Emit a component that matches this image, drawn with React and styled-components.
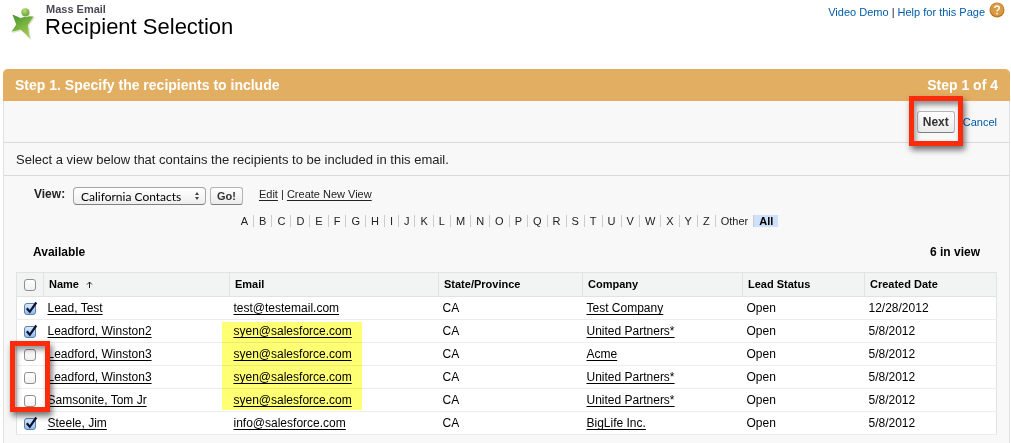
import React, { useState } from "react";
import styled, { createGlobalStyle } from "styled-components";

const GlobalStyle = createGlobalStyle`
  * {
    box-sizing: border-box;
  }
  body {
    margin: 0;
    background: #ffffff;
    color: #222222;
    font-family: "Liberation Sans", Arial, Helvetica, sans-serif;
    font-size: 12px;
    overflow-x: hidden;
  }
`;

const Page = styled.main`
  padding: 0 1px 0 3px;
`;

const Header = styled.header`
  height: 69px;
  display: flex;
  align-items: flex-start;
  padding: 2px 5px 0 6px;
`;

const Heading = styled.h1`
  flex: 1;
  margin: 0 0 0 6px;
  font-weight: normal;
`;

const Kicker = styled.span`
  display: block;
  padding-left: 1px;
  font-size: 11px;
  line-height: 14px;
  font-weight: bold;
  color: #4a4a56;
`;

const Title = styled.span`
  display: block;
  font-size: 22px;
  line-height: 22px;
  color: #000000;
`;

const HelpLinks = styled.nav`
  display: flex;
  align-items: flex-end;
  gap: 4px;
  font-size: 11px;
  line-height: 12px;
  color: #222222;
`;

const BlueLink = styled.a`
  color: #015ba7;
  font-size: 11px;
  text-decoration: none;
`;

const Panel = styled.section`
  border: 1px solid #e0e3e5;
  border-top: 0;
  border-radius: 5px 5px 0 0;
  background: #f8f8f8;
`;

const StepBar = styled.div`
  display: flex;
  justify-content: space-between;
  align-items: center;
  height: 32px;
  margin: 0 -1px;
  padding: 0 12px;
  border-radius: 5px 5px 0 0;
  background: #e2ae62;
  color: #ffffff;
`;

const StepText = styled.h2`
  margin: 0;
  font-size: 14px;
  font-weight: bold;
`;

const Actions = styled.div`
  display: flex;
  justify-content: flex-end;
  align-items: center;
  gap: 8px;
  height: 42px;
  padding: 0 12px;
  border-bottom: 1px solid #dbdbdb;
`;

const Button = styled.button`
  height: ${(props) => (props.$tall ? 22 : 18)}px;
  padding: 0 ${(props) => (props.$tall ? 5 : 6)}px;
  border: 1px solid #b5b5b5;
  border-bottom-color: #7f7f7f;
  border-radius: 3px;
  background: linear-gradient(#ffffff, #ebebeb);
  color: #333333;
  font-family: inherit;
  font-size: ${(props) => (props.$tall ? 12 : 11)}px;
  font-weight: bold;
`;

const Intro = styled.p`
  margin: 0;
  padding: 1px 12px 0;
  font-size: 13px;
  line-height: 31px;
  border-bottom: 1px solid #dbdbdb;
`;

const ViewRow = styled.form`
  display: flex;
  align-items: flex-start;
  gap: 4px;
  padding: 11px 30px 0;
`;

const ViewLabel = styled.label`
  width: 35px;
  line-height: 14px;
  font-weight: bold;
`;

const SelectBox = styled.div`
  position: relative;
  display: flex;
`;

const ViewSelect = styled.select`
  appearance: none;
  width: 133px;
  height: 18px;
  padding: 0 7px;
  border: 1px solid #a5a5a5;
  border-bottom-color: #7f7f7f;
  border-radius: 4px;
  background: linear-gradient(#ffffff, #eeeeee);
  color: #000000;
  font-family: "Lato", sans-serif;
  font-size: 12px;
`;

const SelectArrows = styled.svg`
  position: absolute;
  right: 6px;
  top: 5px;
  pointer-events: none;
`;

const ViewLinks = styled.div`
  padding-left: 12px;
  font-size: 11px;
  line-height: 14px;
  a {
    color: #222222;
    text-underline-offset: 2px;
  }
`;

const Rolodex = styled.nav`
  display: flex;
  justify-content: center;
  margin-top: 10px;
`;

const Letter = styled.a`
  padding: 0 5px;
  border-left: 1px solid ${(props) => (props.$first ? "transparent" : "#cccccc")};
  background: ${(props) => (props.$active ? "#cfe1fa" : "transparent")};
  color: ${(props) => (props.$active ? "#000000" : "#222222")};
  font-size: 11px;
  line-height: 12px;
  font-weight: ${(props) => (props.$active ? "bold" : "normal")};
  text-decoration: none;
`;

const ListHeader = styled.div`
  display: flex;
  justify-content: space-between;
  padding: 17px 29px 12px;
  color: #000000;
  font-size: 12px;
  line-height: 16px;
  font-weight: bold;
`;

const TableWrap = styled.div`
  position: relative;
  padding: 0 12px 8px;
`;

const Table = styled.table`
  width: 100%;
  table-layout: fixed;
  border-collapse: collapse;
  border: 1px solid #e0e3e5;
  background: #ffffff;
  color: #000000;
`;

const Col = styled.col`
  width: ${(props) => props.$width};
`;

const HeadCell = styled.th`
  height: 24px;
  padding: 0 5px 1px;
  border: 1px solid #e0e3e5;
  background: #f2f3f3;
  font-size: 11px;
  text-align: left;
`;

const CheckHeadCell = styled(HeadCell)`
  padding: 0 4px;
`;

const Cell = styled.td`
  height: 23px;
  padding: 0 4px;
  border-bottom: 1px solid #ececec;
  font-size: 12px;
  a {
    color: #000000;
    text-underline-offset: 2px;
  }
`;

const SortArrow = styled.svg`
  margin-left: 7px;
`;

const Checkbox = styled.input`
  appearance: none;
  display: block;
  width: 12px;
  height: 12px;
  margin: 1px 0 0 3px;
  border: 1px solid #8f8f8f;
  border-radius: 3px;
  background: linear-gradient(#ffffff, #f0f0f0);
  &:checked {
    border-color: #5f7fae;
    background: linear-gradient(#dcebfb, #8fbdf0);
  }
`;

const CheckBoxWrap = styled.span`
  position: relative;
  display: block;
`;

const Tick = styled.svg`
  position: absolute;
  left: 3px;
  top: -2px;
  pointer-events: none;
`;

const Highlight = styled.div`
  position: absolute;
  left: 218px;
  top: 50px;
  width: 140px;
  height: 88px;
  background: #ffff73;
  mix-blend-mode: multiply;
  pointer-events: none;
`;

const Callout = styled.div`
  position: absolute;
  border: 5px solid #fb2b0b;
  box-shadow: 2px 4px 6px rgba(0, 0, 0, 0.55), inset 2px 4px 5px rgba(0, 0, 0, 0.4);
  pointer-events: none;
`;

const NextCallout = styled(Callout)`
  inset: -15px -8px -13px;
`;

const RowsCallout = styled(Callout)`
  left: 6px;
  top: 69px;
  width: 40px;
  height: 71px;
`;

const NextWrap = styled.div`
  position: relative;
  display: flex;
`;

const letters = [..."ABCDEFGHIJKLMNOPQRSTUVWXYZ", "Other", "All"];

const columns = [
  { label: "Name", width: "186px" },
  { label: "Email", width: "209px" },
  { label: "State/Province", width: "144px" },
  { label: "Company", width: "160px" },
  { label: "Lead Status", width: "122px" },
  { label: "Created Date", width: "auto" },
];

const recipients = [
  { id: 1, name: "Lead, Test", email: "test@testemail.com", company: "Test Company", date: "12/28/2012", checked: true },
  { id: 2, name: "Leadford, Winston2", email: "syen@salesforce.com", company: "United Partners*", date: "5/8/2012", checked: true },
  { id: 3, name: "Leadford, Winston3", email: "syen@salesforce.com", company: "Acme", date: "5/8/2012", checked: false },
  { id: 4, name: "Leadford, Winston3", email: "syen@salesforce.com", company: "United Partners*", date: "5/8/2012", checked: false },
  { id: 5, name: "Samsonite, Tom Jr", email: "syen@salesforce.com", company: "United Partners*", date: "5/8/2012", checked: false },
  { id: 6, name: "Steele, Jim", email: "info@salesforce.com", company: "BigLife Inc.", date: "5/8/2012", checked: true },
];

const starPath = "M3.5 12.5 11.5 16Q17 13.500 24.500 14.500L18.800 23Q19.500 30 20.800 36.500Q16 31 11.500 27.500L2.500 29.800 7.200 22.500Z";

function Logo() {
  return (
    <svg width="30" height="40" viewBox="0 0 30 40" aria-hidden="true">
      <defs>
        <linearGradient id="body" x1="0" y1="0" x2="0.6" y2="1">
          <stop offset="0" stopColor="#3f8f35" />
          <stop offset="0.5" stopColor="#74b13d" />
          <stop offset="1" stopColor="#a3cb55" />
        </linearGradient>
        <radialGradient id="head" cx="0.4" cy="0.3" r="0.8">
          <stop offset="0" stopColor="#b9dc74" />
          <stop offset="1" stopColor="#5d9f35" />
        </radialGradient>
      </defs>
      <path d={starPath} fill="#dadbd0" stroke="#e9e9e2" transform="translate(1 1)" />
      <path d={starPath} fill="url(#body)" />
      <circle cx="17" cy="11" r="4" fill="#dadbd0" />
      <circle cx="16.3" cy="10.2" r="4" fill="url(#head)" />
    </svg>
  );
}

function HelpIcon() {
  return (
    <svg width="16" height="16" viewBox="0 0 16 16" aria-hidden="true">
      <circle cx="8" cy="8" r="7.5" fill="#bd7822" />
      <circle cx="8" cy="7.5" r="6.5" fill="#d99a43" />
      <path d="M5.8 6Q5.800 4 8 4Q10.300 4 10.300 6Q10.300 7 9 7.800Q8 8.400 8 9.500" fill="none" stroke="#fff" strokeWidth="1.4" />
      <circle cx="8" cy="11.600" r="0.9" fill="#fff" />
    </svg>
  );
}

function CheckCell({ label, checked, onChange }) {
  return (
    <CheckBoxWrap>
      <Checkbox type="checkbox" aria-label={label} checked={checked} onChange={onChange} />
      {checked && (
        <Tick width="14" height="14" viewBox="0 0 14 14">
          <path d="M2.8 7.200 5.800 10.800 12.300 1.500" fill="none" stroke="#0a1230" strokeWidth="2.2" />
        </Tick>
      )}
    </CheckBoxWrap>
  );
}

function App() {
  const [rows, setRows] = useState(recipients);

  const toggleRow = (id) => {
    setRows(rows.map((row) => (row.id === id ? { ...row, checked: !row.checked } : row)));
  };

  const allChecked = rows.every((row) => row.checked);

  const toggleAll = () => {
    setRows(rows.map((row) => ({ ...row, checked: !allChecked })));
  };

  return (
    <Page>
      <GlobalStyle />
      <Header>
        <Logo />
        <Heading>
          <Kicker>Mass Email</Kicker>
          <Title>Recipient Selection</Title>
        </Heading>
        <HelpLinks>
          <span>
            <BlueLink href="#demo">Video Demo</BlueLink> | <BlueLink href="#help">Help for this Page</BlueLink>
          </span>
          <HelpIcon />
        </HelpLinks>
      </Header>
      <Panel>
        <StepBar>
          <StepText>Step 1. Specify the recipients to include</StepText>
          <StepText as="span">Step 1 of 4</StepText>
        </StepBar>
        <Actions>
          <NextWrap>
            <Button type="button" $tall>
              Next
            </Button>
            <NextCallout />
          </NextWrap>
          <BlueLink href="#cancel">Cancel</BlueLink>
        </Actions>
        <Intro>Select a view below that contains the recipients to be included in this email.</Intro>
        <ViewRow onSubmit={(event) => event.preventDefault()}>
          <ViewLabel htmlFor="view">View:</ViewLabel>
          <SelectBox>
            <ViewSelect id="view">
              <option>California Contacts</option>
            </ViewSelect>
            <SelectArrows width="6" height="8" viewBox="0 0 6 8">
              <path d="M3 0 5 3H1ZM3 8 1 5H5Z" fill="#444" />
            </SelectArrows>
          </SelectBox>
          <Button>Go!</Button>
          <ViewLinks>
            <a href="#edit">Edit</a> | <a href="#create">Create New View</a>
          </ViewLinks>
        </ViewRow>
        <Rolodex>
          {letters.map((letter, index) => (
            <Letter key={letter} href="#list" $first={index === 0} $active={letter === "All"}>
              {letter}
            </Letter>
          ))}
        </Rolodex>
        <ListHeader>
          <span>Available</span>
          <span>6 in view</span>
        </ListHeader>
        <TableWrap>
          <Table>
            <colgroup>
              <Col $width="27px" />
              {columns.map((column) => (
                <Col key={column.label} $width={column.width} />
              ))}
            </colgroup>
            <thead>
              <tr>
                <CheckHeadCell>
                  <CheckCell label="Select all" checked={allChecked} onChange={toggleAll} />
                </CheckHeadCell>
                {columns.map((column) => (
                  <HeadCell key={column.label}>
                    {column.label}
                    {column.label === "Name" && (
                      <SortArrow width="7" height="7" viewBox="0 0 7 7">
                        <path d="M3.5 7V1M1 3.500 3.500 1 6 3.500" fill="none" stroke="#222" />
                      </SortArrow>
                    )}
                  </HeadCell>
                ))}
              </tr>
            </thead>
            <tbody>
              {rows.map((row) => (
                <tr key={row.id}>
                  <Cell>
                    <CheckCell label={row.name} checked={row.checked} onChange={() => toggleRow(row.id)} />
                  </Cell>
                  <Cell>
                    <a href="#contact">{row.name}</a>
                  </Cell>
                  <Cell>
                    <a href="#email">{row.email}</a>
                  </Cell>
                  <Cell>CA</Cell>
                  <Cell>
                    <a href="#account">{row.company}</a>
                  </Cell>
                  <Cell>Open</Cell>
                  <Cell>{row.date}</Cell>
                </tr>
              ))}
            </tbody>
          </Table>
          <Highlight />
          <RowsCallout />
        </TableWrap>
      </Panel>
    </Page>
  );
}

export default App;
